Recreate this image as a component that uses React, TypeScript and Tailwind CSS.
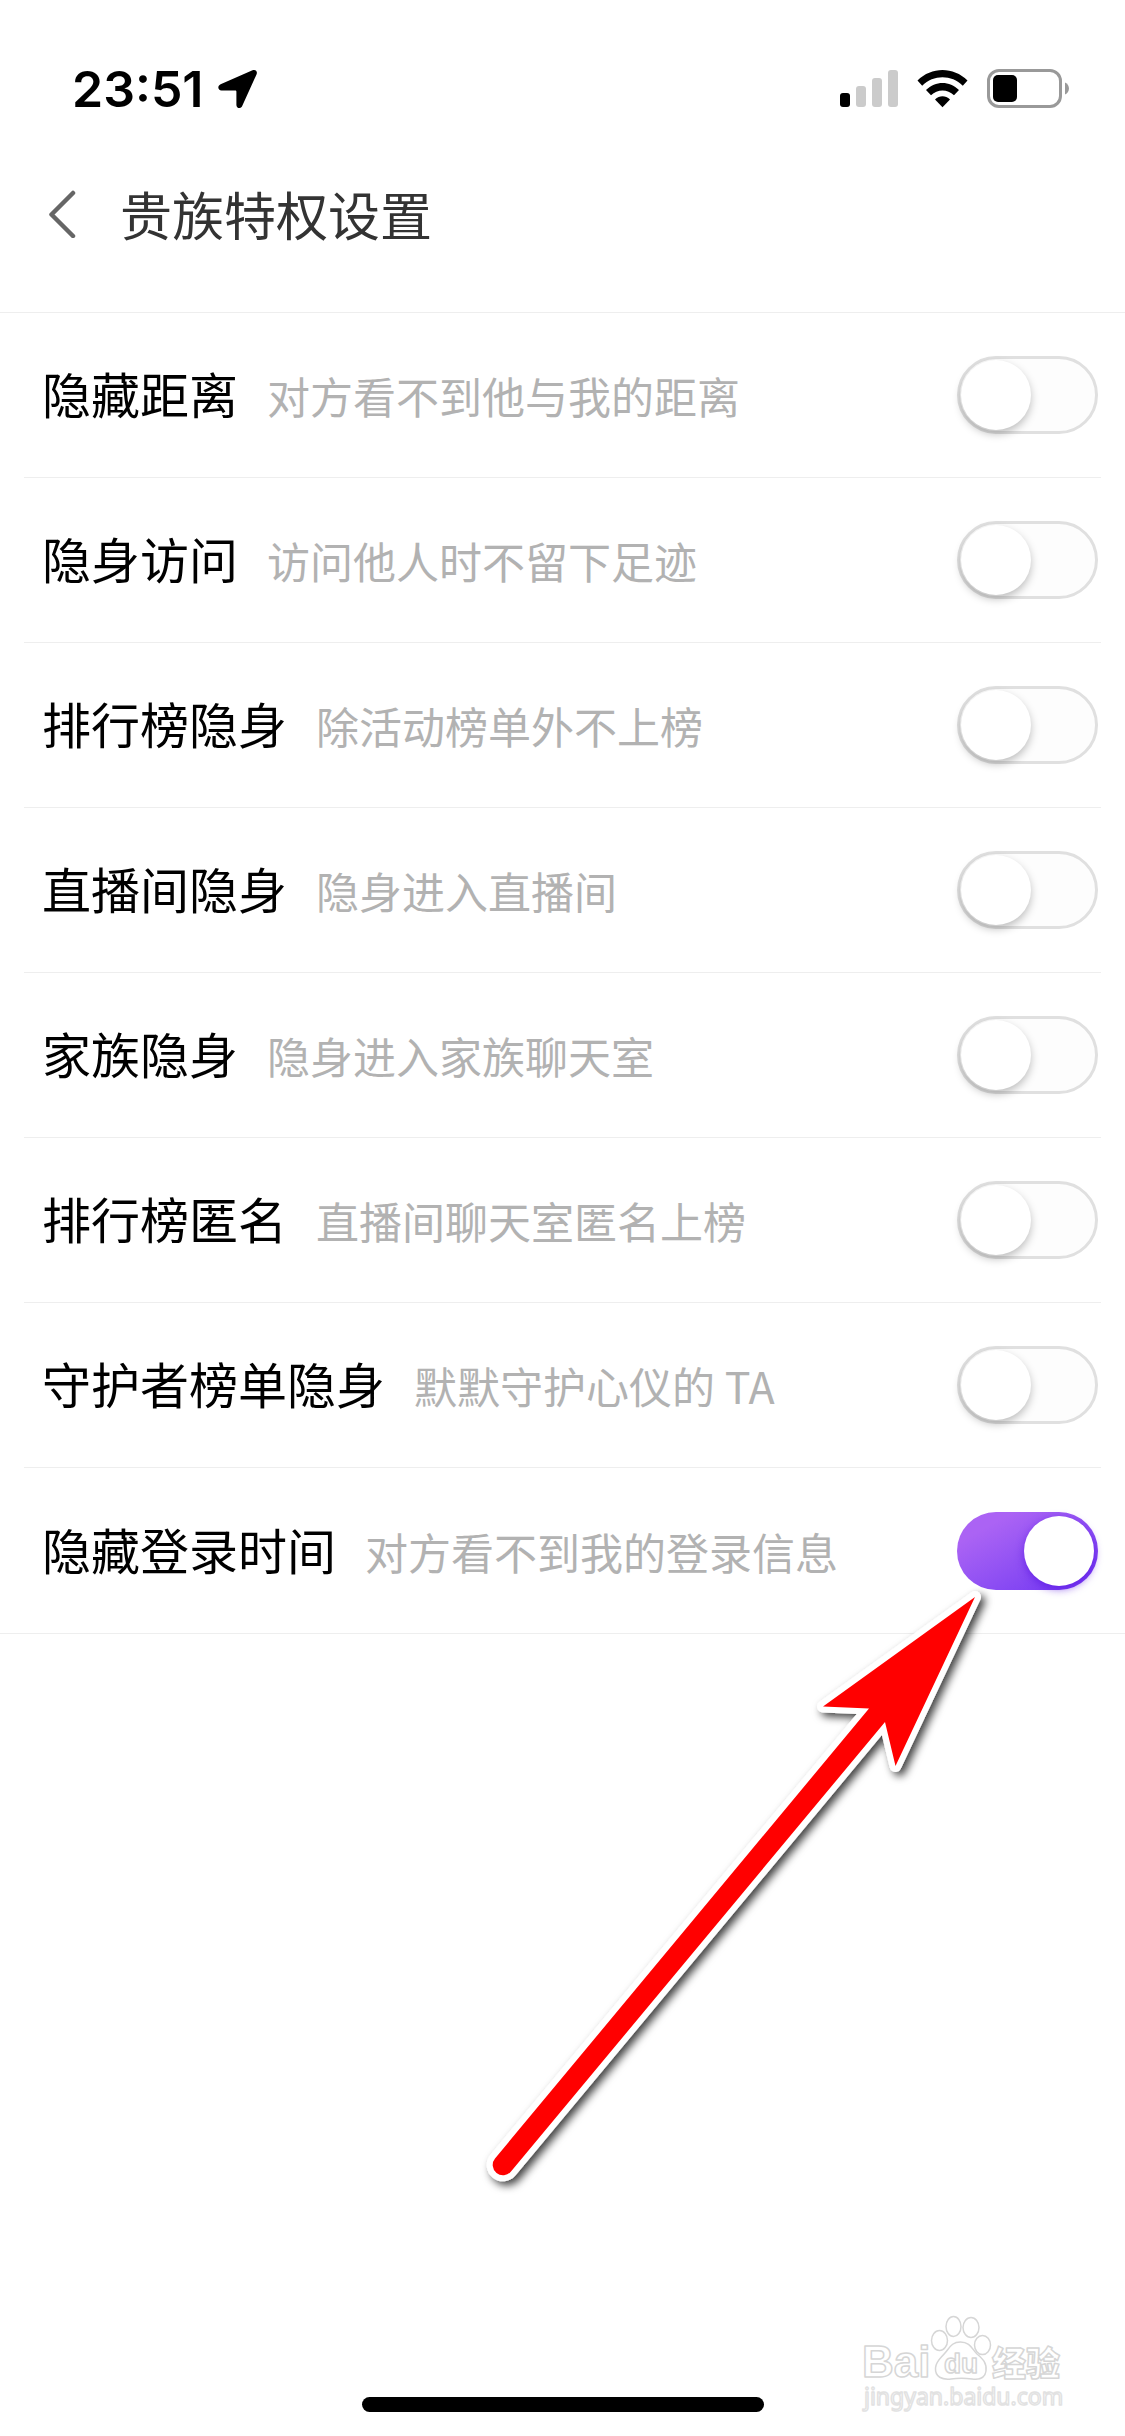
import { useState } from 'react'

interface Privilege {
  id: string
  label: string
  hint: string
  enabled: boolean
}

const initialPrivileges: Privilege[] = [
  { id: 'distance', label: '隐藏距离', hint: '对方看不到他与我的距离', enabled: false },
  { id: 'visit', label: '隐身访问', hint: '访问他人时不留下足迹', enabled: false },
  { id: 'rank-hidden', label: '排行榜隐身', hint: '除活动榜单外不上榜', enabled: false },
  { id: 'live-hidden', label: '直播间隐身', hint: '隐身进入直播间', enabled: false },
  { id: 'family-hidden', label: '家族隐身', hint: '隐身进入家族聊天室', enabled: false },
  { id: 'rank-anonymous', label: '排行榜匿名', hint: '直播间聊天室匿名上榜', enabled: false },
  { id: 'guardian-hidden', label: '守护者榜单隐身', hint: '默默守护心仪的 TA', enabled: false },
  { id: 'login-time', label: '隐藏登录时间', hint: '对方看不到我的登录信息', enabled: true },
]

const StatusBar = () => (
  <div className="h-[132px] pt-[45px] pl-[72px] pr-[55px] flex items-center justify-between">
    <div className="flex items-center gap-[14px]">
      <span className="font-['Inter',sans-serif] font-semibold text-[50px] leading-none text-black">23:51</span>
      <svg width="40" height="40" viewBox="0 0 40 40" aria-hidden="true">
        <path
          d="M34.5 1.3 2.6 15.2C-.9 16.8-.2 21.4 3.5 21.4H17.2c.8 0 1.2.4 1.2 1.2V36c0 3.6 4.3 4.2 5.8 1.1L38.5 5.5c1.4-3.1-1-5.5-4-4.2Z"
          fill="#000"
        />
      </svg>
    </div>
    <svg width="230" height="39" viewBox="0 0 230 39" aria-hidden="true">
      <rect x="0" y="24" width="10" height="14" rx="3" fill="#000" />
      <rect x="16" y="17" width="10" height="21" rx="3" fill="#cbcbcb" />
      <rect x="32" y="9" width="10" height="29" rx="3" fill="#cbcbcb" />
      <rect x="48" y="1" width="10" height="37" rx="3" fill="#cbcbcb" />
      <g transform="translate(77 1)">
        <path d="M.5 10.5C14.5-3.5 36.5-3.5 50.5 10.5L45.8 15.8C34.5 4.5 16.5 4.5 5.2 15.8Z" fill="#000" />
        <path d="M9 20C18.5 10.6 32.5 10.6 42 20L37 25.2C30.5 18.8 20.5 18.8 14 25.2Z" fill="#000" />
        <path d="M18 29.5C22.5 25.3 28.5 25.3 33 29.5L25.5 37.2Z" fill="#000" />
      </g>
      <rect x="148.5" y="1.5" width="72" height="36" rx="10.5" fill="none" stroke="#999" strokeWidth="3" />
      <rect x="153" y="6" width="24" height="27" rx="5" fill="#000" />
      <path d="M225 13.5C230.3 15.5 230.3 23.5 225 25.5Z" fill="#999" />
    </svg>
  </div>
)

const Header = () => (
  <header className="h-[180px] pb-4 pl-12 flex items-center gap-11">
    <button type="button" aria-label="返回" className="shrink-0 cursor-pointer">
      <svg width="28" height="48" viewBox="0 0 28 48" fill="none" aria-hidden="true">
        <path d="M25 3 3.5 24.5 25 46" stroke="#666" strokeWidth="4.5" strokeLinecap="round" strokeLinejoin="round" />
      </svg>
    </button>
    <h1 className="text-[52px] leading-none text-[#333]">贵族特权设置</h1>
  </header>
)

interface PrivilegeRowProps {
  item: Privilege
  onToggle: (id: string) => void
}

const PrivilegeRow = ({ item, onToggle }: PrivilegeRowProps) => (
  <li className="h-[165px] pl-[18px] pr-[3px] flex items-center justify-between">
    <div className="pb-1 flex items-center gap-[29px]">
      <label htmlFor={item.id} className="text-[49px] leading-[72px] text-black">
        {item.label}
      </label>
      <span className="pt-1 text-[43px] leading-[64px] text-[#b2b2b2]">{item.hint}</span>
    </div>
    <input
      id={item.id}
      type="checkbox"
      role="switch"
      checked={item.enabled}
      onChange={() => onToggle(item.id)}
      className="relative shrink-0 appearance-none cursor-pointer w-[141px] h-[78px] rounded-full border-[3px] border-[#e0e0e0] bg-[#fdfdfd] before:content-[''] before:absolute before:left-px before:top-px before:size-[70px] before:rounded-full before:bg-white before:shadow-[0_4px_8px_rgba(0,0,0,0.25)] checked:border-0 checked:bg-linear-to-br checked:from-[#ab63f4] checked:from-20% checked:to-[#7a3cf2] checked:to-85% checked:before:left-[67px] checked:before:top-1 checked:before:shadow-[0_3px_9px_rgba(88,20,225,0.65)]"
    />
  </li>
)

// Arrow pointing at the last switch
const PointerArrow = () => (
  <svg
    width="520"
    height="620"
    viewBox="480 1580 520 620"
    className="absolute top-[1580px] right-[125px] pointer-events-none"
    aria-hidden="true"
  >
    <defs>
      <filter id="arrow-shadow" x="-10%" y="-10%" width="120%" height="120%">
        <feDropShadow dx="4" dy="4" stdDeviation="4" floodColor="#000" floodOpacity="0.75" />
      </filter>
    </defs>
    <g filter="url(#arrow-shadow)">
      <path
        d="M975 1597 823 1706.5 869 1708.5 495 2158.5A10 10 0 0 0 511 2171.5L885 1722 895.5 1766Z"
        fill="#fff"
        stroke="#fff"
        strokeWidth="12"
        strokeLinejoin="round"
      />
    </g>
    <path d="M975 1597 823 1706.5 869 1708.5 495 2158.5A10 10 0 0 0 511 2171.5L885 1722 895.5 1766Z" fill="#f00" />
  </svg>
)

const Watermark = () => (
  <svg
    width="220"
    height="110"
    viewBox="0 0 220 110"
    className="absolute bottom-[16px] right-[50px] pointer-events-none"
    fill="#fff"
    stroke="#d6d6d6"
    strokeWidth="1.5"
    strokeLinejoin="round"
  >
    <ellipse cx="84.5" cy="30.5" rx="8" ry="10" />
    <ellipse cx="98.5" cy="16.5" rx="7.5" ry="10" />
    <ellipse cx="116" cy="17.5" rx="8" ry="10" />
    <ellipse cx="127.5" cy="35" rx="8" ry="9.5" />
    <path d="M105.5 32C115 32 117 39 122 44 128 49 132 53 131 61 130 68 124 70 117 69 109 68 104 68 96 69 87 70 80 67 80.5 58 81 51 86 48 90 43 95 37 97 32 105.5 32Z" />
    <g className="font-['Liberation_Sans',sans-serif]" fontWeight="700">
      <text x="7" y="67" fontSize="44">Bai</text>
      <text x="89" y="63" fontSize="28">du</text>
    </g>
    <text x="137" y="66" fontSize="34" fontWeight="900" className="font-['Noto_Sans_CJK_SC',sans-serif]">经验</text>
    <text x="9" y="95" fontSize="23" stroke="#e2e2e2" className="font-['Noto_Sans',sans-serif]">jingyan.baidu.com</text>
  </svg>
)

const App = () => {
  const [privileges, setPrivileges] = useState(initialPrivileges)

  const handleToggle = (id: string) => {
    setPrivileges((prev) => prev.map((p) => (p.id === id ? { ...p, enabled: !p.enabled } : p)))
  }

  return (
    <div className="relative min-h-screen flex flex-col bg-white font-['Noto_Sans_CJK_SC',sans-serif]">
      <StatusBar />
      <Header />
      <main className="grow">
        <ul className="px-6 border-y border-[#eee] divide-y divide-[#eee]">
          {privileges.map((item) => (
            <PrivilegeRow key={item.id} item={item} onToggle={handleToggle} />
          ))}
        </ul>
      </main>
      <PointerArrow />
      <Watermark />
      <div className="mx-auto mb-6 w-[402px] h-[15px] rounded-full bg-black" />
    </div>
  )
}

export default App
